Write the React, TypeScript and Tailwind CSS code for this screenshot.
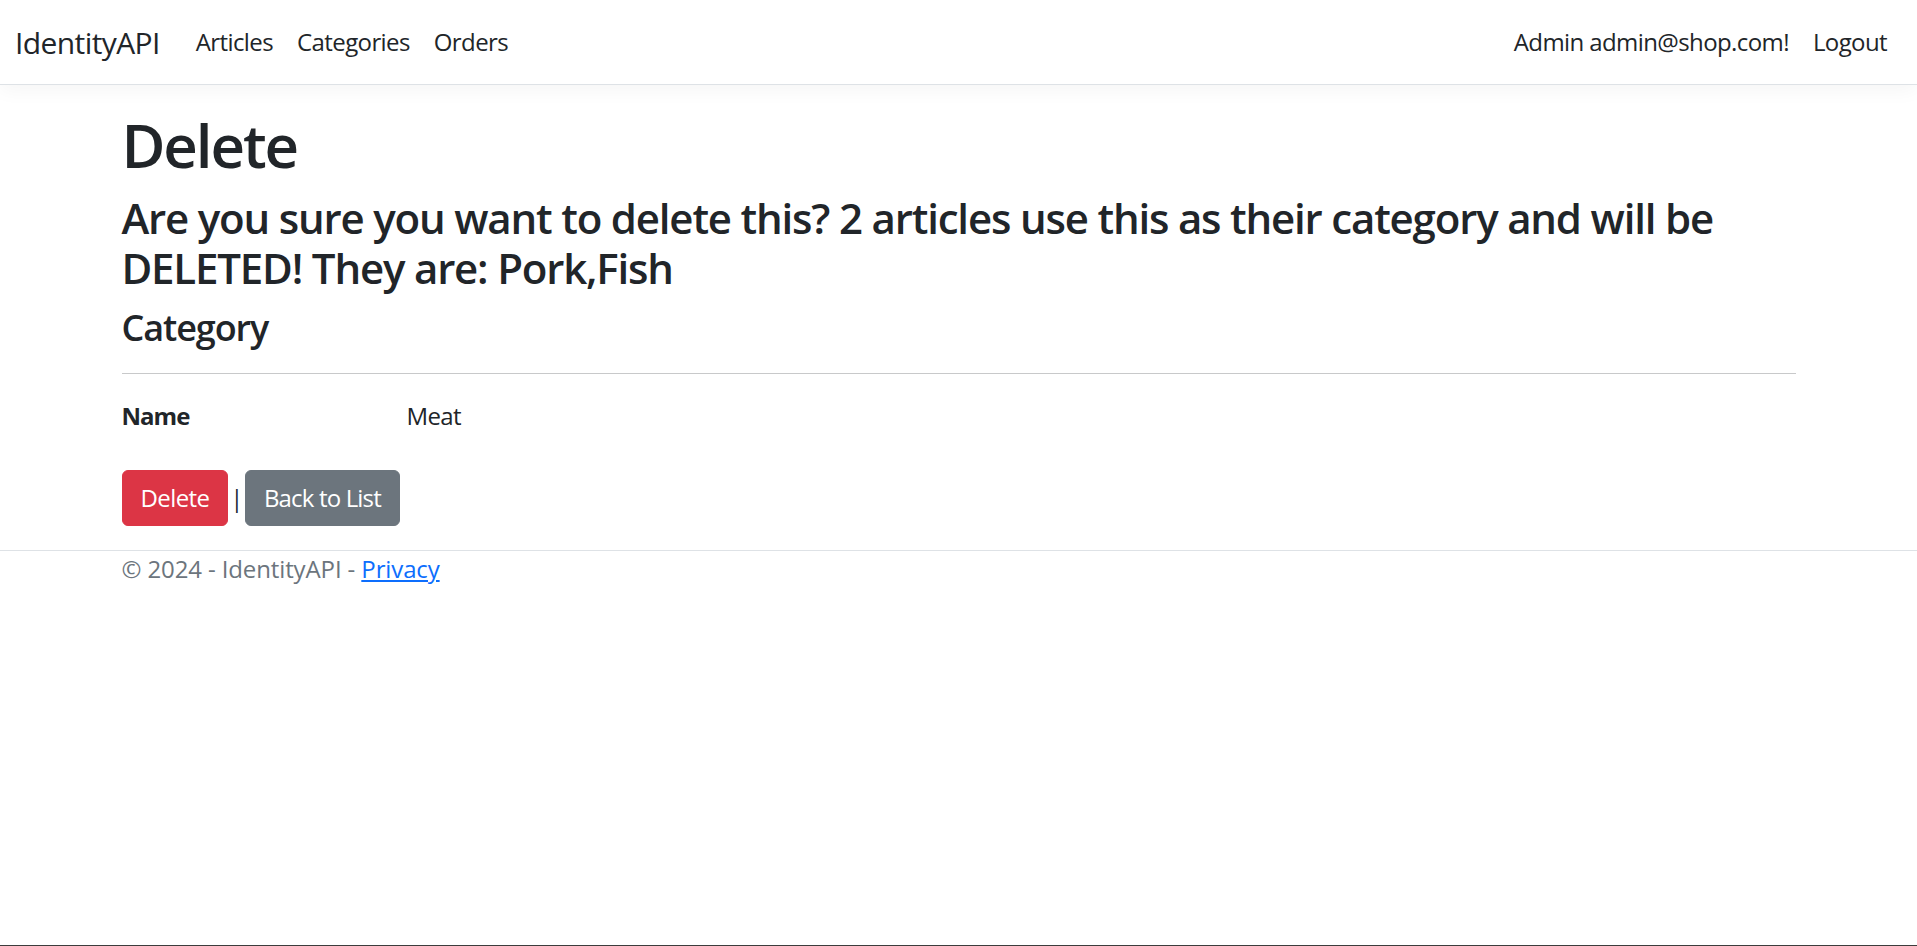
import React from 'react';

const FONT = { fontFamily: '"Open Sans", "Noto Sans", Arial, sans-serif' };

function Navbar() {
  return (
    <nav className="bg-white border-b border-[#dee2e6] shadow-[0_6px_18px_rgba(0,0,0,0.04)] py-[12px] mb-[24px]">
      <div className="flex items-center pl-[15px] pr-[18px]">
        <a className="text-[30px] leading-[45px] py-[7.5px] mr-[24px] text-[#212529]">IdentityAPI</a>
        <ul className="flex flex-1 items-center">
          <li><a className="block px-[12px] py-[12px] text-[24px] leading-[36px] text-[#212529]">Articles</a></li>
          <li><a className="block px-[12px] py-[12px] text-[24px] leading-[36px] text-[#212529]">Categories</a></li>
          <li><a className="block px-[12px] py-[12px] text-[24px] leading-[36px] text-[#212529]">Orders</a></li>
        </ul>
        <ul className="flex items-center">
          <li><a className="block px-[12px] py-[12px] text-[24px] leading-[36px] text-[#212529]">Admin admin@shop.com!</a></li>
          <li><a className="block px-[12px] py-[12px] text-[24px] leading-[36px] text-[#212529]">Logout</a></li>
        </ul>
      </div>
    </nav>
  );
}

export default function App() {
  return (
    <div className="h-screen flex flex-col bg-white text-[#212529] text-[24px] leading-[36px] tracking-[-0.025em] border-b border-[#3c3c3c]" style={FONT}>
      <Navbar />
      <main className="w-[1710px] mx-auto px-[18px] pb-[24px]">
        <h1 className="text-[60px] leading-[72px] font-semibold tracking-[-0.035em] mb-[12px]">Delete</h1>
        <h3 className="text-[42px] leading-[50.4px] font-semibold tracking-[-0.028em] mb-[12px]">
          Are you sure you want to delete this? 2 articles use this as their category and will be DELETED! They are: Pork,Fish
        </h3>
        <div>
          <h4 className="text-[36px] leading-[43.2px] font-semibold tracking-[-0.03em]">Category</h4>
          <hr className="my-[24px] border-0 border-t border-[#c8c9ca]" />
          <dl className="grid grid-cols-[285px_1fr] -mx-[18px] mb-[24px]">
            <dt className="px-[18px] font-bold tracking-[-0.04em]">Name</dt>
            <dd className="px-[18px] mb-[12px]">Meat</dd>
          </dl>
        </div>
        <form className="flex items-center" onSubmit={(e) => e.preventDefault()}>
          <button type="submit" className="bg-[#dc3545] border border-[#dc3545] text-white rounded-[6px] px-[18px] py-[9px] text-[24px] leading-[36px]">
            Delete
          </button>
          <span className="px-[2px] text-[#1d2a3a]">|</span>
          <a className="bg-[#6c757d] border border-[#6c757d] text-white rounded-[6px] px-[18px] py-[9px] text-[24px] leading-[36px] tracking-[-0.035em]">
            Back to List
          </a>
        </form>
      </main>
      <footer className="border-t border-[#dee2e6] text-[#6c757d] tracking-[-0.005em]">
        <div className="w-[1710px] mx-auto px-[18px]">
          © 2024 - IdentityAPI - <a className="text-[#0d6efd] underline">Privacy</a>
        </div>
      </footer>
    </div>
  );
}
